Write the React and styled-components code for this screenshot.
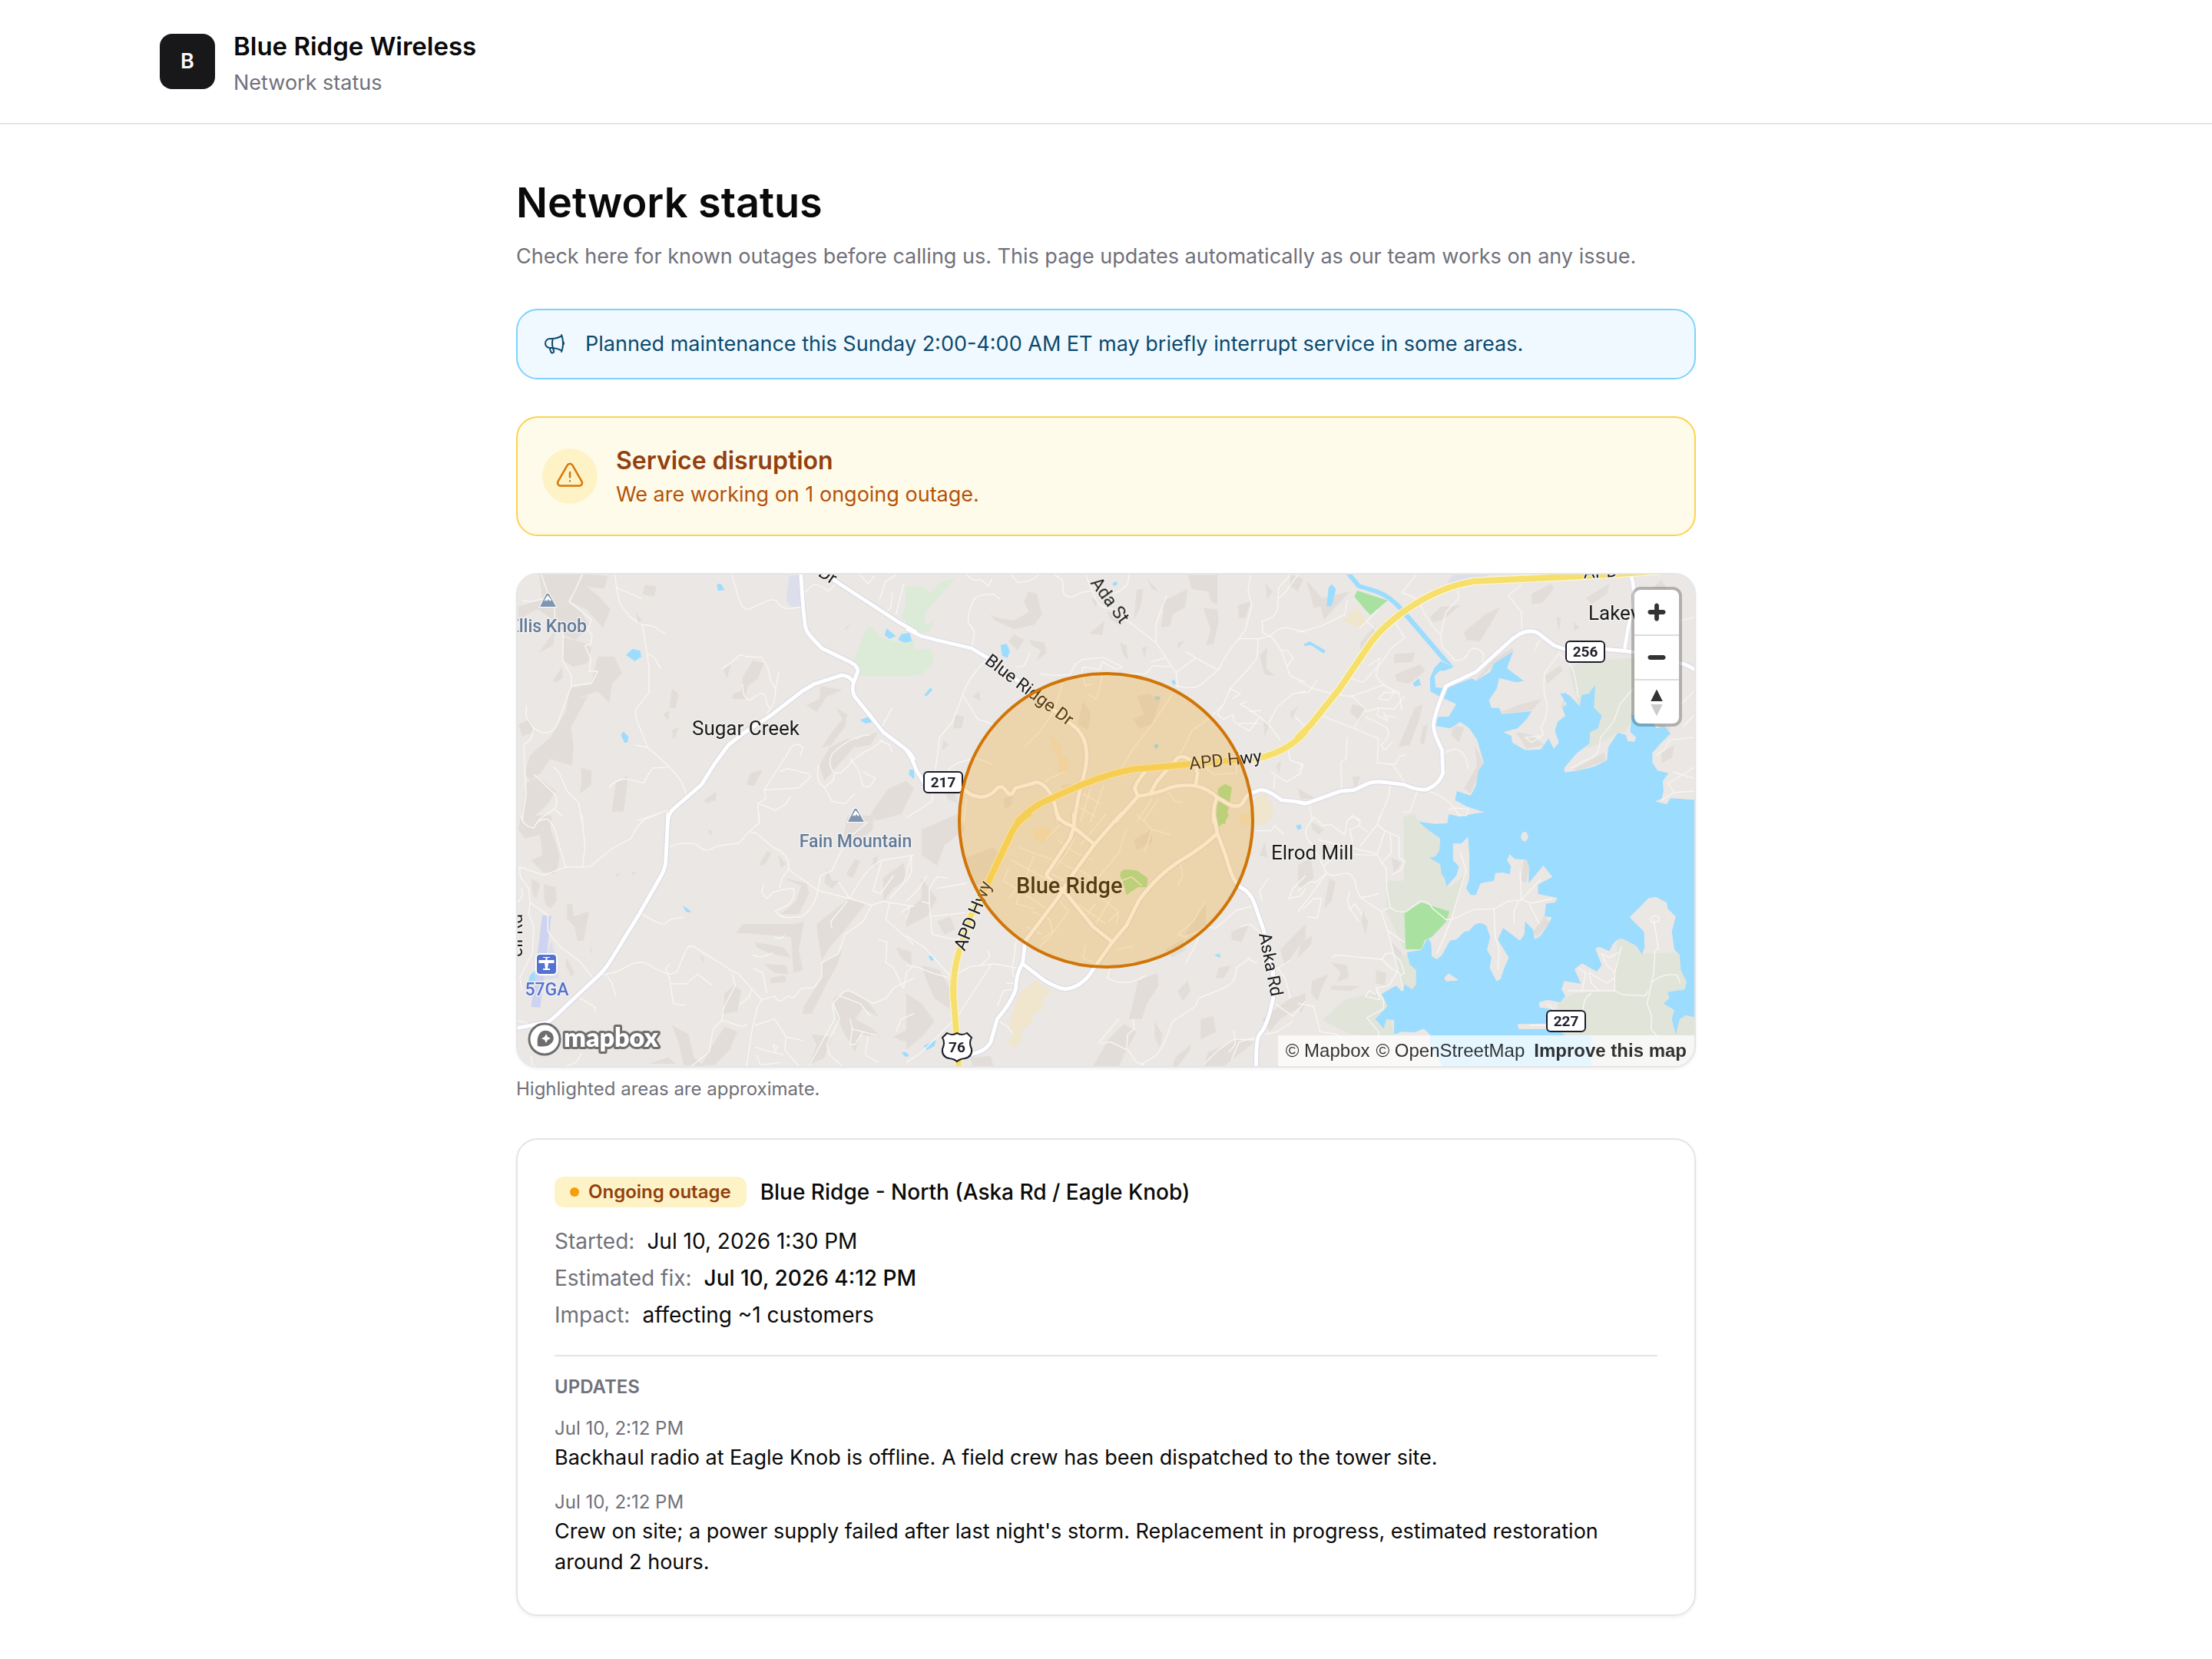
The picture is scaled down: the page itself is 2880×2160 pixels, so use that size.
import React from "react";
import styled, { createGlobalStyle } from "styled-components";
import { HiOutlineMegaphone, HiOutlineExclamationTriangle } from "react-icons/hi2";

const GlobalStyle = createGlobalStyle`
  *, *::before, *::after {
    box-sizing: border-box;
  }
  body {
    margin: 0;
    background: #ffffff;
    color: #0a0a0a;
    font-family: Inter, "Liberation Sans", sans-serif;
    font-size: 27px;
    line-height: 40px;
  }
  h1, h2, h3, p, dl, dd, ul {
    margin: 0;
    padding: 0;
  }
`;

const Header = styled.header`
  border-bottom: 2px solid #e5e5e5;
`;

const HeaderInner = styled.div`
  display: flex;
  align-items: center;
  gap: 24px;
  max-width: 2560px;
  margin: 0 auto;
  padding: 32px 48px;
`;

const Logo = styled.div`
  display: flex;
  align-items: center;
  justify-content: center;
  width: 72px;
  height: 72px;
  border-radius: 16px;
  background: #18181b;
  color: #fafafa;
  font-size: 27px;
  font-weight: 600;
`;

const BrandName = styled.div`
  font-size: 33px;
  font-weight: 600;
  line-height: 56px;
`;

const Muted = styled.p`
  color: #71717a;
`;

const Main = styled.main`
  display: flex;
  flex-direction: column;
  gap: 48px;
  max-width: 1536px;
  margin: 0 auto;
  padding: 64px 0 56px;
`;

const PageTitle = styled.h1`
  margin-bottom: 12px;
  font-size: 54px;
  font-weight: 600;
  line-height: 76px;
`;

const Notice = styled.div`
  display: flex;
  align-items: center;
  gap: 24px;
  padding: 24px 32px;
  border: 2px solid #7dd3fc;
  border-radius: 28px;
  background: #f0f9ff;
  color: #0c4a6e;

  svg {
    width: 32px;
    height: 32px;
  }
`;

const Alert = styled.section`
  display: flex;
  align-items: center;
  gap: 24px;
  padding: 32px;
  border: 2px solid #fcd34d;
  border-radius: 28px;
  background: #fffbeb;
  color: #b45309;
`;

const AlertIcon = styled.span`
  display: flex;
  align-items: center;
  justify-content: center;
  width: 72px;
  height: 72px;
  border-radius: 50%;
  background: #fef3c7;
  color: #d97706;

  svg {
    width: 40px;
    height: 40px;
  }
`;

const AlertTitle = styled.h2`
  color: #92400e;
  font-size: 32px;
  font-weight: 600;
  line-height: 48px;
`;

const MapFrame = styled.div`
  position: relative;
  overflow: hidden;
  border: 2px solid #e5e5e5;
  border-radius: 28px;
  box-shadow: 0 2px 4px rgba(0, 0, 0, 0.06);
`;

const MapCanvas = styled.svg`
  display: block;
  width: 100%;
  height: 640px;
  font-family: Roboto, "Liberation Sans", sans-serif;
`;

const MapLabel = styled.text`
  fill: ${props => props.$color || "#1a1a1a"};
  stroke: #f2f0ee;
  stroke-width: 3px;
  stroke-linejoin: round;
  paint-order: stroke;
  font-size: ${props => props.$size || 23}px;
  font-weight: ${props => props.$weight || 400};
`;

const MapControls = styled.div`
  position: absolute;
  top: 20px;
  right: 20px;
  display: flex;
  flex-direction: column;
  overflow: hidden;
  border-radius: 8px;
  background: #ffffff;
  outline: 4px solid rgba(0, 0, 0, 0.24);
`;

const ControlButton = styled.button`
  display: block;
  width: 58px;
  height: 58px;
  padding: 0;
  border: 0;
  background: transparent;
  cursor: pointer;

  & + & {
    border-top: 2px solid #dddddd;
  }

  svg {
    display: block;
    width: 58px;
    height: 56px;
  }
`;

const MapLogo = styled.a`
  position: absolute;
  left: 12px;
  bottom: 8px;

  svg {
    display: block;
    width: 180px;
    height: 52px;
    font-family: Lato, sans-serif;
  }
`;

const Attribution = styled.div`
  position: absolute;
  right: 0;
  bottom: 0;
  display: flex;
  gap: 8px;
  padding: 0 10px;
  background: rgba(255, 255, 255, 0.75);
  font-family: "Liberation Sans", Arial, sans-serif;
  font-size: 24px;
  line-height: 40px;

  a {
    color: rgba(0, 0, 0, 0.8);
    text-decoration: none;
  }
  a:last-child {
    margin-left: 4px;
    font-weight: 700;
  }
`;

const Caption = styled.p`
  margin-top: 12px;
  color: #71717a;
  font-size: 24px;
  line-height: 32px;
`;

const Card = styled.article`
  padding: 48px;
  border: 2px solid #e5e5e5;
  border-radius: 28px;
  box-shadow: 0 2px 4px rgba(0, 0, 0, 0.06);
`;

const CardHead = styled.div`
  display: flex;
  flex-wrap: wrap;
  align-items: center;
  gap: 18px;
  margin-bottom: 24px;
`;

const Badge = styled.span`
  display: inline-flex;
  align-items: center;
  gap: 12px;
  padding: 0 20px;
  border-radius: 12px;
  background: #fef3c7;
  color: #92400e;
  font-size: 24px;
  font-weight: 600;

  &::before {
    content: "";
    width: 12px;
    height: 12px;
    border-radius: 50%;
    background: #f59e0b;
  }
`;

const CardTitle = styled.h3`
  font-size: 28px;
  font-weight: 500;
`;

const Facts = styled.dl`
  display: flex;
  flex-direction: column;
  gap: 8px;
  font-size: 28px;
`;

const Fact = styled.div`
  display: flex;
  gap: 16px;

  dt {
    color: #71717a;
  }
  dd {
    font-weight: ${props => (props.$strong ? 500 : 400)};
  }
`;

const Updates = styled.div`
  margin-top: 32px;
  padding-top: 24px;
  border-top: 2px solid #e5e5e5;
`;

const UpdatesTitle = styled.h3`
  color: #71717a;
  font-size: 24px;
  font-weight: 600;
  line-height: 32px;
`;

const UpdateList = styled.ul`
  display: flex;
  flex-direction: column;
  gap: 22px;
  margin-top: 22px;
  list-style: none;

  time {
    display: block;
    margin-bottom: 2px;
    color: #71717a;
    font-size: 24px;
    line-height: 32px;
  }
`;

// Each tile has its own origin; inside a tile three units make one map pixel.
const tiles = [
  {
    id: "nw",
    transform: "translate(670 740) scale(0.3333)",
    terrain: [
      "M95 20 L260 20 L230 100 L205 130 L260 170 L290 220 L240 280 L190 260 L150 200 L90 160 L15 200 L15 150 L110 120 Z",
      "M270 20 L365 30 L350 80 L280 70 L330 110 L375 160 L345 230 L280 160 L215 130 L240 75 Z",
      "M190 270 L270 290 L300 310 L285 370 L230 385 L190 360 Z",
      "M325 345 L390 345 L420 410 L380 450 L370 525 L325 480 L235 510 L285 500 L220 620 L230 690 L225 770 L140 745 L100 800 L60 830 L40 800 L60 730 L140 660 L200 560 L215 470 L300 450 Z",
      "M45 840 L90 815 L160 870 L130 920 L60 985 L30 960 Z",
      "M150 440 L185 385 L188 430 L160 445 Z", "M95 330 L160 240 L150 300 Z",
      "M260 780 L300 790 L300 845 L255 880 L262 830 Z", "M395 840 L440 810 L440 850 L425 950 L380 950 Z",
      "M615 470 L640 490 L630 545 L605 545 Z", "M615 630 L645 620 L620 670 Z", "M580 570 L605 555 L600 595 Z",
      "M930 360 L975 370 L950 430 L910 460 L900 510 L850 510 L855 490 L885 480 L890 430 Z",
      "M510 65 L555 70 L545 110 L500 100 Z", "M815 395 L845 375 L830 430 Z", "M475 175 L495 200 L485 225 Z",
      "M920 800 L970 785 L935 850 L905 845 Z", "M740 905 L790 870 L785 905 L750 918 Z",
      "M1285 240 L1310 215 L1300 235 Z", "M1195 460 L1280 475 L1220 500 L1180 560 L1140 535 L1190 510 Z",
      "M1255 545 L1300 570 L1290 620 L1235 690 L1200 700 L1240 640 L1280 590 Z",
      "M1230 700 L1300 665 L1350 670 L1280 750 L1210 830 L1190 770 Z",
      "M1350 660 L1420 640 L1390 690 L1330 700 Z",
      "M1460 860 L1530 830 L1560 860 L1510 960 L1410 985 L1390 960 Z",
      "M1395 290 L1425 275 L1420 315 L1395 325 Z", "M15 610 L60 590 L80 640 L30 655 Z"
    ],
    parks: [
      "M1325 360 L1375 232 L1395 228 L1430 270 L1500 290 L1560 280 L1560 418 L1350 418 Z",
      "M1562 60 L1512 190 L1562 235 Z"
    ],
    estates: ["M1072 30 L1112 25 L1122 150 L1080 150 L1062 125 Z"],
    water: [
      "M790 62 L805 60 L820 84 L795 88 Z", "M435 338 L460 315 L490 322 L495 345 L470 362 Z",
      "M415 650 L425 638 L445 658 L440 680 L430 682 Z", "M1453 235 L1490 265 L1465 275 L1446 262 Z",
      "M1510 258 L1540 252 L1552 282 L1525 290 L1498 280 Z", "M1350 592 L1390 578 L1400 600 L1370 606 Z",
      "M1545 785 L1560 790 L1560 822 L1540 805 Z"
    ],
    minor: [
      "M265 25 L215 130 L300 200 L285 240 L303 262 L298 295 L275 302 L298 355 L292 403 L325 402 L300 450 L222 458 L165 615 Q130 665 75 625 L45 580 L47 535",
      "M155 155 L158 200 L190 260 L188 360 L222 420 L222 458", "M105 25 L130 100", "M30 125 L60 130 L110 120",
      "M75 625 L65 665 L35 690 L42 820 L45 880 L30 985", "M392 25 L398 75 L410 135 L450 190 L500 222 L525 385 L525 485 L475 550 Q470 570 480 600 L520 700 L605 775 L650 830 L672 885",
      "M398 75 L498 118", "M500 222 Q540 218 560 240 L590 255", "M520 335 Q545 340 555 365 L572 392", "M472 690 L520 700",
      "M370 855 Q400 820 435 823 L505 838 Q530 790 540 780 L605 775", "M848 25 L880 130 Q890 160 915 160 L980 130 Q1010 115 1025 130 Q1045 160 1075 158 L1120 150",
      "M1130 95 L1165 65 Q1190 60 1225 90 L1260 55", "M812 392 L870 350 Q875 330 905 345 L965 347 L990 390 L1000 440 L1020 470 L1015 520 L985 570",
      "M1032 405 L1020 470", "M890 450 Q890 510 920 515 L960 487 Q985 490 985 530 L995 545",
      "M1115 735 L1127 700 Q1100 675 1080 700 L1040 765 L975 865 L1110 858 L1155 815 Q1160 800 1130 798 L1065 782 L1035 795",
      "M975 865 L982 900 L950 918 L955 990", "M950 918 L1018 945 L1060 920 L1078 890",
      "M1190 765 Q1170 830 1210 855 L1240 910 L1290 920 L1330 880", "M1390 650 Q1310 655 1240 725 Q1220 770 1250 800 L1245 830 L1210 855",
      "M1440 670 L1400 700 Q1320 740 1305 770 L1275 798 L1250 800", "M1310 740 L1345 790 L1360 850 L1385 855 L1410 820 L1360 795",
      "M1425 672 L1465 690 L1475 720", "M1475 545 L1435 620", "M75 805 L155 880 Q175 910 155 940 L190 970",
      "M152 775 L175 800 L205 870 L250 915 L263 990", "M480 985 L600 945", "M90 985 L155 940",
      "M1425 125 L1450 50 L1490 25", "M1475 95 L1470 150 L1450 175", "M1520 60 L1490 180", "M1350 25 L1380 60 L1405 30"
    ],
    roads: [
      "M1117 0 L1127 150 L1135 225 Q1140 250 1165 275 L1200 312 L1310 365 Q1345 385 1340 405 L1325 445 Q1315 470 1328 500 L1440 640 L1530 708 Q1550 725 1562 750",
      "M598 1000 Q598 960 620 940 L730 845 L780 765 L835 690 L900 640 L1000 575 L1120 482 L1170 452 L1275 418 Q1305 416 1325 445",
      "M1200 15 L1500 210 L1570 250"
    ],
    highway: []
  },
  {
    id: "n",
    transform: "translate(1180 740) scale(0.3333)",
    terrain: [
      "M475 90 L510 100 L530 180 L500 220 L420 238 L350 205 L325 180 L345 190 L420 205 L480 170 L460 130 Z",
      "M420 258 L460 280 L435 320 L400 285 Z", "M480 280 L540 290 L548 330 L510 360 L525 320 L490 300 Z",
      "M715 255 L775 205 L765 260 Z", "M785 170 L820 175 L850 210 L835 225 L800 200 Z", "M835 290 L860 300 L865 360 L845 330 Z",
      "M900 85 L925 80 L915 150 L890 200 Z", "M940 40 L985 90 L960 80 Z", "M1100 25 L1215 25 L1215 140 L1190 130 L1180 90 L1115 80 Z",
      "M1000 130 L1100 80 L1090 150 L1040 180 L1030 225 L995 230 L1005 170 Z", "M1160 155 L1215 160 L1220 210 L1200 295 L1170 300 L1190 240 Z",
      "M1295 145 L1345 130 L1325 195 L1300 195 Z", "M1380 340 L1410 310 L1405 390 L1440 420 L1400 415 Z",
      "M1400 55 L1430 90 L1410 120 L1405 75 Z", "M920 310 L940 305 L930 350 Z", "M1060 290 L1090 280 L1060 315 Z",
      "M1500 560 L1530 540 L1505 590 Z", "M1395 590 L1420 610 L1400 655 Z", "M190 570 L225 580 L215 625 L185 625 Z",
      "M900 500 L950 490 L990 520 L960 610 L910 625 L885 590 L930 570 Z", "M690 520 L720 560 L710 630 L670 610 Z",
      "M145 670 L165 690 L140 710 Z", "M145 860 L190 870 L200 920 L160 900 Z", "M1445 770 L1465 750 L1455 800 Z",
      "M380 900 L420 880 L410 925 L385 940 Z", "M605 850 L650 840 L630 880 Z", "M1500 25 L1550 40 L1530 90 L1500 70 Z",
      "M260 500 L285 480 L290 520 Z", "M720 115 L750 125 L740 150 Z"
    ],
    parks: [
      "M-2 75 L60 68 L90 95 L135 55 L190 40 L150 85 L70 180 L75 225 L110 200 L90 250 L50 250 L-2 222 Z",
      "M-2 320 L100 315 L105 375 L60 415 L-2 418 Z"
    ],
    woods: ["M1218 860 L1245 842 L1272 855 L1262 920 L1245 1000 L1210 980 Z"],
    sand: [
      "M1370 890 L1400 880 L1435 935 L1410 990 L1345 990 Z",
      "M560 650 L605 690 L600 730 L632 740 L630 790 L600 815 L595 740 L570 700 Z"
    ],
    water: [
      "M368 300 L392 295 L404 325 L395 350 L375 342 Z", "M70 495 L95 465 L102 475 L78 500 Z", "M805 60 L820 50 L825 62 L812 70 Z",
      "M1035 440 L1045 434 L1053 448 L1045 456 Z", "M970 500 L990 500 L992 512 L975 515 Z", "M967 692 L978 684 L986 695 L976 706 Z",
      "M10 790 L25 785 L32 815 L25 822 Z", "M-2 255 L15 255 L20 285 L-2 290 Z", "M1552 295 L1562 292 L1562 302 Z"
    ],
    minor: [
      "M235 25 L260 45 L295 45 L320 70 L335 40", "M410 25 L435 55 Q490 55 515 25", "M580 25 L610 45 L615 100 Q640 125 680 95 L720 88",
      "M700 25 L740 120 Q760 160 800 155 L865 205 L975 290 L1055 410 L1060 465", "M870 25 L865 60 L840 85 L810 100",
      "M368 122 L340 100 Q280 100 265 120 Q235 180 243 215 Q270 240 265 265 L255 310", "M975 290 L975 220 L1000 150 L1018 105",
      "M310 360 Q240 430 220 495 L180 600 L130 660 L115 780 L100 910 L0 975", "M220 495 L280 590 Q320 600 335 610 L330 650",
      "M430 385 L460 380 L485 330", "M520 412 L580 418 L640 415 L660 375 L690 355 L770 348 L845 385 L820 395 L765 365 L755 395 L690 385 L685 410",
      "M780 412 L935 412 L965 380 L1030 385", "M955 365 L1010 350", "M1345 25 L1335 90 L1350 140 L1325 240 L1295 280 Q1250 330 1220 395 L1150 455 Q1120 475 1055 460",
      "M1055 405 L1130 350 L1095 325 M1130 350 L1215 395", "M1500 25 L1455 75 L1450 160 Q1440 195 1390 205 L1392 250 L1422 265 L1375 275 L1295 275",
      "M1530 25 L1475 100 L1452 118", "M1422 265 Q1450 230 1490 232 L1560 250", "M1422 265 Q1465 310 1475 350 L1500 420 L1560 445",
      "M1465 320 L1490 322 L1512 350 L1490 380", "M1375 275 L1370 350 L1330 400 L1265 470 L1240 530 L1190 580 L1115 635 L1090 690 L1065 735",
      "M1265 470 L1305 490 L1275 510 M1240 530 L1215 570 L1240 590 L1275 570 L1280 600 L1340 635 L1380 580 L1330 545 L1305 530 L1330 520",
      "M1340 560 L1385 555 M1380 580 L1420 615 L1460 670 M1415 605 L1450 540 L1510 490 L1560 480", "M1300 605 L1375 605",
      "M1490 705 L1500 750 L1550 765 L1540 800 L1485 835 L1425 795 M1440 810 L1435 860", "M1520 580 L1560 620",
      "M1040 490 L960 610 L890 700 L820 810", "M610 450 L575 560 L520 640 L465 695", "M335 765 L270 740 L200 760 L160 790",
      "M690 420 L700 460 L730 450 M765 420 L755 470 L740 510 L710 490", "M235 900 L225 990", "M620 795 L560 820 L535 840",
      "M720 860 L680 990 M770 850 L720 990 M690 880 L760 920 M670 930 L740 970", "M1160 770 L1200 805 L1290 800 L1290 760",
      "M960 900 L900 990 M985 900 L925 990 M1020 870 L1050 910 L1080 915"
    ],
    roads: [
      "M0 235 L60 265 L140 285 L255 312 L310 345 L450 450 L640 605 Q690 640 700 690 Q712 750 690 820 Q668 900 655 995",
      "M0 710 Q20 735 40 790 L70 840 L215 850 Q245 890 290 893 Q330 893 355 858 Q375 845 390 870 Q410 900 425 858 Q480 845 510 835 Q550 845 575 905 L595 985",
      "M815 992 L905 890 L960 880 L1000 868 Q1060 840 1130 850 Q1180 860 1215 895 L1240 910 Q1290 945 1315 915 Q1330 880 1355 875 L1385 865 Q1415 865 1465 905 L1520 910 L1562 920",
      "M905 890 L892 860 Q900 830 945 780", "M950 885 L980 830 L1060 740 Q1085 725 1125 760 L1138 800 L1130 850", "M1215 895 Q1195 930 1202 995"
    ],
    highway: ["M1562 635 Q1490 715 1380 740 L1110 765 L880 785 Q760 810 640 865 L530 915 Q470 950 430 995"]
  },
  {
    id: "ne",
    transform: "translate(1690 740) scale(0.338 0.3333)",
    terrain: [
      "M510 190 L550 150 L625 145 L560 200 L520 210 Z", "M640 250 L720 180 L780 150 L740 220 L700 285 L650 280 Z",
      "M900 100 L975 60 L985 80 L940 135 L900 140 Z", "M1110 115 L1200 60 L1190 100 L1130 140 Z", "M995 190 L1012 195 L1005 245 Z",
      "M1060 210 L1085 230 L1065 245 Z", "M30 45 L70 90 L110 140 L60 155 L45 90 Z", "M240 290 L300 220 L290 290 L240 330 Z",
      "M370 335 L450 330 L440 365 L370 370 Z", "M375 415 L470 375 L490 400 L430 450 L380 440 Z", "M210 530 L260 545 L240 600 L200 560 Z",
      "M385 700 L450 545 L480 530 L470 580 L430 690 Z", "M480 620 L500 610 L485 690 L470 680 Z", "M680 690 L714 760 L690 820 L665 880 L640 860 L690 770 Z",
      "M600 615 L640 620 L620 680 L590 650 Z", "M680 440 L750 360 L825 310 L830 325 L750 380 L700 430 Z",
      "M780 560 L860 530 L940 510 L900 555 L790 568 Z", "M950 420 L1010 380 L1020 400 L960 450 Z", "M840 640 L900 650 L950 690 L880 705 Z",
      "M1110 400 L1130 395 L1125 440 Z", "M1060 785 L1180 720 L1185 750 L1080 790 Z", "M1380 610 L1435 620 L1420 645 Z",
      "M1400 720 L1450 690 L1440 740 L1400 760 Z", "M1400 45 L1420 80 L1370 75 Z", "M210 815 L240 810 L220 870 Z", "M0 860 L70 900 L10 900 Z",
      "M1010 545 L1030 500 L1025 540 Z", "M200 90 L100 200 L80 120 Z"
    ],
    sage: ["M1045 390 L1100 365 L1300 350 L1300 560 L1260 640 L1230 640 L1150 690 L1110 700 L1080 540 Z", "M410 970 L450 960 L460 1000 L405 1000 Z"],
    woods: ["M217 110 L228 87 L345 125 L280 182 L262 165 Z"],
    sand: ["M175 205 L225 152 L265 205 L240 235 Z"],
    estates: ["M575 55 L600 25 L740 22 L700 48 L620 62 Z"],
    water: [
      "M580 465 L670 430 L685 440 L740 405 L755 372 L828 325 L805 390 L870 440 L840 445 L775 428 L765 470 L735 515 L745 545 L775 545 L785 570 L830 565 L900 558 L880 590 L845 625 L790 640 L822 655 L825 680 L875 710 L935 708 L965 665 L985 705 L1005 680 L990 635 L1000 600 L1030 575 L1018 545 L1035 530 L1010 490 L1030 487 L1050 500 L1085 540 L1093 495 L1120 490 L1145 455 L1140 545 L1170 575 L1155 625 L1125 640 L1122 685 L1070 725 L1025 780 L1028 797 L1080 790 L1140 775 L1190 750 L1195 700 L1232 642 L1262 650 L1270 675 L1295 678 L1303 660 L1280 640 L1285 570 L1370 600 L1380 625 L1410 615 L1435 645 L1400 680 L1365 720 L1365 760 L1385 790 L1428 800 L1405 830 L1408 870 L1400 900 L1375 910 L1420 922 L1435 898 L1535 905 L1535 995 L575 995 L580 965 L620 970 L720 953 L650 930 L605 905 L612 870 L665 888 L685 850 L695 790 L716 760 L690 670 L660 625 L625 600 L585 625 L530 615 L540 580 L580 580 L610 530 L545 500 L510 480 L508 430 L525 390 L550 362 L600 385 L565 400 Z",
      "M185 22 L207 22 L240 62 L300 80 Q360 100 410 160 L600 385 L555 360 L390 165 Q350 115 290 95 L228 76 Z",
      "M118 75 L130 62 L146 80 L130 148 L110 148 Z", "M22 300 L45 285 L105 320 L100 333 L50 300 L25 302 Z", "M442 450 L465 430 L474 455 L450 462 Z"
    ],
    land: ["M526 420 L545 400 L575 400 L595 435 L580 470 L530 465 Z"],
    minor: [
      "M0 250 L90 225 L180 180 L190 125 M235 235 L310 160 M262 205 L300 240 M375 215 L412 270 L360 310 L320 370 L250 445 L205 430",
      "M455 25 L400 95 Q450 110 470 135 Q490 200 550 260 L555 305 L605 360 Q650 360 660 320 Q690 300 715 335 L710 375",
      "M550 260 Q560 210 570 170 L620 115 L615 85", "M860 65 L810 105 L860 170 L862 240", "M940 270 Q915 300 912 325",
      "M1010 325 L950 410 Q940 480 960 530 Q960 590 935 620 L945 650 L900 680 L875 660 L935 655",
      "M1005 330 L1055 385 Q1070 420 1078 505", "M1290 470 L1240 530 L1215 600 L1165 660 Q1160 720 1145 730 L1050 780",
      "M270 380 L315 350 L300 420 Q330 465 390 485 L400 555 M205 500 L330 455 L385 490 M330 485 L310 510 L350 515 L370 485 Z",
      "M260 560 L310 545 L370 550 L410 500 M310 545 L305 575 L345 595 L330 560 M380 580 L330 575 M90 575 L215 625 L310 665 L305 760 L365 765 L410 835",
      "M205 495 L260 550 L215 625 M260 580 L340 620 Q365 650 320 690 L335 710 L365 675 M345 765 L375 765 L390 735 L418 728",
      "M190 660 L185 745 L165 755 L168 865", "M565 720 L600 705 Q650 710 655 785", "M0 440 L60 470 L130 490 L205 500 M0 485 L40 485 L75 435",
      "M355 845 L350 890 L310 985 M460 870 L430 950 L400 952", "M500 870 Q570 890 600 935 L655 940 L650 965 L620 965 L600 935 L575 945",
      "M1380 730 L1410 710 L1430 670 L1530 660 M1400 905 L1450 875 L1530 870 M1425 840 L1530 775 M1445 795 L1525 820 M1425 840 L1450 875",
      "M1480 620 L1530 570 M1475 530 L1530 475 M1470 205 L1530 190 M0 765 L20 770 L0 790 M45 925 L55 990 M190 985 L210 965 L240 990"
    ],
    roads: [
      "M-2 912 Q30 922 50 912 L165 870 L215 866 L270 840 Q300 830 330 835 L410 845 Q450 865 490 865 Q540 850 558 800 L555 710 Q520 640 522 610 Q525 570 570 460 L685 405 L830 272 Q880 235 920 250 L985 300 L1025 315 L1180 315 L1250 322 L1300 328",
      "M1258 315 L1272 230 L1290 150 Q1300 70 1280 20", "M1470 370 Q1500 375 1535 400"
    ],
    highway: ["M1400 10 L1100 30 L680 50 Q560 70 450 140 Q340 210 280 290 L160 470 L50 610 L-5 665"]
  },
  {
    id: "sw",
    transform: "translate(670 1060) scale(0.3333)",
    terrain: [
      "M25 5 L145 5 L140 60 L160 110 L175 160 L170 200 L155 235 L110 225 L65 180 L110 160 L100 80 L40 95 L15 60 Z",
      "M115 275 L160 285 L165 335 L140 370 L120 350 L115 320 Z", "M65 255 L100 270 L85 330 L70 310 Z",
      "M205 350 L225 350 L230 400 L290 380 L270 495 L245 495 L235 440 L205 410 Z", "M200 560 L235 620 L220 635 L200 590 Z",
      "M955 200 L985 145 L1005 150 L975 200 Z", "M1030 160 L1060 195 L1040 210 Z", "M1295 235 L1330 175 L1350 185 L1320 250 Z",
      "M1220 215 L1240 260 L1270 260 L1240 290 L1210 270 Z", "M1400 170 L1420 165 L1410 205 L1400 200 Z",
      "M1050 250 L1140 270 L1150 310 L1110 390 L1040 390 L1100 340 L1120 280 Z", "M865 465 L890 430 L1090 430 L1130 420 L1110 530 L1125 610 L1090 620 L1080 480 L900 465 Z",
      "M940 500 L1050 520 L1080 560 L1000 545 L945 520 Z", "M975 585 L1060 590 L1070 625 L1015 620 Z", "M1000 640 L1055 630 L1060 655 L1000 660 Z",
      "M1180 430 L1280 350 L1305 330 L1370 350 L1300 440 L1230 520 L1200 570 L1185 480 Z", "M1440 250 L1520 190 L1530 250 L1480 290 L1440 340 Z",
      "M1130 750 L1200 640 L1200 580 L1280 530 L1260 590 L1220 660 L1160 780 L1125 780 Z",
      "M1245 720 L1300 690 L1380 730 L1420 790 L1360 760 L1330 800 L1400 840 L1430 870 L1350 860 L1330 930 L1290 860 L1260 800 Z",
      "M820 700 L860 670 L885 690 L870 770 L815 780 Z", "M775 900 L820 830 L870 850 L840 920 L780 980 L730 980 Z",
      "M615 825 L680 860 L700 950 L740 985 L660 980 L640 890 Z", "M525 975 L600 950 L630 975 Z", "M725 550 L740 560 L735 585 Z",
      "M395 235 L415 228 L400 245 Z", "M455 230 L475 222 L465 240 Z", "M755 60 L772 65 L765 85 Z", "M295 505 L305 550 L298 540 Z",
      "M1490 520 L1550 540 L1550 590 L1510 560 Z", "M1160 860 L1240 870 L1210 950 L1150 980 L1180 900 Z",
      "M1480 870 L1560 830 L1560 900 L1500 880 Z", "M1300 5 L1400 5 L1400 60 L1350 100 L1280 140 L1290 60 Z"
    ],
    estates: ["M145 495 L172 600 L172 640 L80 650 Z"],
    runway: ["M108 395 L143 398 L100 755 L65 753 Z"],
    water: ["M78 612 L60 630 L53 660 L80 660 Z", "M656 356 L688 378 L685 384 L670 382 Z", "M1512 930 L1530 930 L1540 945 L1525 948 Z"],
    minor: [
      "M25 5 Q30 45 75 55 Q90 15 130 20 Q160 50 165 90 L180 140 L200 207 L295 205 L380 135 L455 95 Q480 40 510 20 L560 0",
      "M263 0 L275 130 L265 205 M200 207 L115 238 L15 205 M20 205 L22 245 L55 290 L60 345 L130 395 L130 460 L180 520 L255 575 L310 645",
      "M12 345 L30 320 L28 290 M60 345 L55 390 L75 440 L70 540 L20 640 L30 690", "M600 130 Q650 105 710 118 Q740 150 765 138 Q790 120 875 115 L915 68 L955 35 L955 0",
      "M915 68 L945 75 L1010 130 Q1060 150 1070 190 L1070 215 L1110 245 L1185 298 L1310 330 L1395 355 L1440 340 L1465 345 L1560 360",
      "M1070 215 L1045 250 L1035 290 M975 275 L965 305 L985 330 L1010 305 Q1060 290 1090 290 Q1100 320 1070 355 L1015 380",
      "M1185 298 Q1170 370 1120 400 L1070 405 Q1030 400 1020 380 M1185 298 L1195 240 L1240 220 L1270 155 L1315 85 L1380 30",
      "M490 385 Q560 430 585 430 L610 410 L660 403", "M345 628 L400 615 L470 580 L510 580 Q570 620 610 625 L635 615 L670 530 Q680 510 700 517 L850 612 L875 625 L965 725",
      "M605 585 L590 605 L605 640 L620 740 L665 747 M610 662 L670 663 L715 625 L770 668 M360 630 L380 660 L395 708 M255 718 L315 755 L315 775",
      "M965 725 L1015 710 Q1030 740 1050 725 L1065 710 L1090 718 L1120 680 L1170 678 L1200 635 L1200 580 L1265 545 L1290 470 L1360 420 L1395 355",
      "M965 725 L950 750 L930 830 L905 990 M850 625 L862 670 L815 760 L810 805 L775 840 L760 930 L690 985 M810 805 L890 830 L910 820",
      "M925 680 L915 715 L878 745 M940 825 L1015 800 L1035 830 L1060 870 L1055 920 L1110 985 M1060 870 L1125 885 M930 550 L960 560 L1010 542 M930 600 L970 620 L985 700",
      "M1310 330 L1265 265 M1310 330 Q1370 210 1435 180 L1560 160 M1435 180 L1400 300 L1430 310 L1480 240 M1550 160 L1520 270 L1465 330 M1465 345 L1450 410 L1560 510",
      "M1245 740 Q1290 680 1310 690 L1400 740 L1450 720 L1480 680 L1560 640 M1245 740 L1270 800 L1220 900 L1230 940 L1280 985 M1240 740 L1250 800 L1195 900 L1150 985",
      "M1270 710 L1350 740 L1390 790 M1310 800 L1320 840 L1420 865 M1320 830 L1310 900 L1330 900 L1360 850 M1560 590 L1530 620 L1520 680 L1480 600 L1450 580 L1455 500 L1420 490",
      "M940 910 L990 925 L1050 940 M945 940 L960 980 L1040 970 M1010 900 L1028 910 L1018 925 Z M200 985 L240 970 L262 935 M70 985 L65 945 M12 805 L60 820",
      "M1510 385 L1545 360 L1530 410 M1240 445 L1235 420 L1300 340 M1015 483 L1045 485 L1055 472 M1380 870 L1370 940 L1420 970 M1490 850 L1510 800 L1560 780"
    ],
    roads: ["M600 -5 L590 190 Q585 220 570 245 L490 385 L370 580 Q350 610 330 628 L200 750 Q150 800 130 812 L0 838"],
    highway: []
  },
  {
    id: "s",
    transform: "translate(1180 1060) scale(0.3333)",
    terrain: [
      "M60 60 L200 0 L230 60 L150 120 L120 200 L60 160 Z", "M60 250 L120 330 L80 400 L0 440 L0 380 L60 330 Z",
      "M235 170 L340 130 L380 180 L320 260 L260 280 L240 230 Z", "M60 590 L130 610 L170 680 L170 760 L110 720 L80 650 Z",
      "M0 700 L60 740 L110 810 L60 870 L0 920 Z", "M120 420 L170 400 L190 450 L150 470 Z", "M250 950 L330 945 L340 985 L260 985 Z",
      "M905 650 L980 620 L985 670 L940 740 L920 800 L870 800 L890 720 Z", "M790 880 L850 820 L900 850 L860 920 L830 985 L730 985 Z",
      "M1010 530 L1080 490 L1090 530 L1040 560 Z", "M1150 800 L1200 790 L1210 850 L1150 880 Z", "M1090 470 L1170 340 L1170 430 L1110 480 Z",
      "M1270 460 L1340 430 L1310 500 L1270 490 Z", "M1220 600 L1270 590 L1240 640 L1210 640 Z", "M1460 530 L1560 430 L1560 480 L1480 590 Z",
      "M1390 800 L1500 720 L1560 700 L1560 740 L1460 800 L1420 850 Z", "M1060 690 L1100 650 L1110 690 L1080 730 Z",
      "M890 100 L960 60 L960 110 L900 140 Z", "M970 810 L1000 860 L990 910 L970 870 Z", "M1400 110 L1410 170 L1380 160 Z",
      "M1050 950 L1110 900 L1110 920 L1060 985 L1040 985 Z", "M1180 930 L1290 880 L1360 890 L1240 985 L1160 985 Z"
    ],
    woods: ["M1210 0 L1262 0 L1245 30 L1220 50 Z", "M835 240 Q835 216 860 216 L900 220 L943 250 L940 285 L905 285 L860 316 L850 275 Z"],
    sand: [
      "M512 645 L530 670 L568 690 L540 720 L535 760 L495 780 L490 815 L445 850 L452 880 L420 915 L395 890 L420 860 L400 820 L440 700 Z",
      "M490 60 L560 50 L570 90 L530 110 L500 100 Z", "M1300 0 L1440 0 L1400 40 L1310 45 Z"
    ],
    water: ["M85 555 L100 552 L108 570 L98 573 Z", "M68 905 L115 882 L110 905 L80 922 Z", "M1203 550 L1225 545 L1226 562 Z", "M1522 45 L1540 40 L1545 55 L1530 62 Z", "M-2 935 L10 938 L5 948 Z"],
    minor: [
      "M20 160 L20 225 L0 265 M80 240 L50 290 L0 340 M160 250 L120 245 L90 290 L90 350 L60 340 M120 290 L235 270 M90 350 L95 400 L230 385",
      "M95 400 L100 470 L190 490 L240 470 M0 475 L70 520 L170 630 M0 590 L50 600 L100 620 L170 640 M0 970 L60 930 L200 790 L330 590",
      "M170 640 L250 595 L345 585 L430 600 M320 530 L325 560 L290 590 M430 490 L415 600 L420 640 M390 660 L425 662 M415 685 L380 690 L355 750 M355 805 L395 830 L415 855",
      "M440 130 L520 160 L610 190 M410 180 L560 260 M400 210 L380 260 L520 350 L560 380 M460 240 L430 350 L500 370 M500 160 L460 260 L400 330",
      "M545 100 L600 40 M590 100 L660 150 L730 180 M540 220 L620 260 M620 200 L700 230 L760 280 M660 90 L620 160 L560 230",
      "M700 280 L830 380 L790 420 M640 330 L780 430 M740 350 L700 400 M800 330 L740 430 M830 380 L820 430 M850 300 L840 260 L880 245 L920 280",
      "M600 340 L635 380 L560 480 L520 520 M490 380 L560 410 L570 460 L530 490 M470 440 L530 470 M700 510 L690 560 L740 585",
      "M780 0 L680 120 M900 0 L960 60 L930 150 M960 60 L1030 80 M860 60 L830 150 L790 200 L740 260 M1070 190 L1080 240 L1060 280",
      "M800 590 L785 640 Q860 680 935 630 M820 530 L890 515 M1350 360 L1290 375 L1210 445 L1160 440 L1120 530 L1090 585 M1170 340 L1120 420 L1060 470 L1090 480 L1160 450",
      "M1345 560 L1290 600 Q1290 660 1240 680 L1140 720 L1130 750 L1040 810 L1010 890 L980 940 L915 980 M1370 580 L1340 570 M1305 440 L1345 430 L1390 470",
      "M750 895 L830 800 M760 895 L800 890 L860 920 L865 860 L890 840 L885 800 M865 920 L900 970 L930 980 M1365 880 L1280 880 L1220 920 L1160 980",
      "M1370 870 L1300 890 L1270 960 M1280 845 L1285 900 L1260 930 M1440 740 L1510 790 L1560 730 M1400 860 L1450 850 L1510 810 M1450 600 L1480 640 L1500 720",
      "M1360 65 L1425 65 L1440 45 L1475 80 M1390 340 L1380 300 L1415 250 M1560 240 L1510 290 L1495 330 L1540 320 L1560 290 M1440 610 L1500 570"
    ],
    roads: [
      "M655 -5 L655 50 L640 95 L545 238", "M588 -5 Q595 30 650 48 L735 118",
      "M1200 -5 L1215 75 L1250 170 Q1275 265 1305 285 Q1345 305 1360 350 L1395 450 L1432 610 L1433 720 Q1410 830 1380 860 Q1365 880 1367 990",
      "M842 -5 L735 118 L650 235 L590 330 L465 495 L455 580 Q430 620 428 680 Q415 730 355 800 L330 890 Q310 930 240 940",
      "M545 238 L625 310 L730 440 L805 500 L860 435 L910 335 Q980 240 1065 185 Q1160 130 1215 75",
      "M805 500 L755 570 L710 635 Q670 680 620 683 Q590 680 540 650 L455 585"
    ],
    highway: ["M485 -5 Q440 20 415 65 L320 265 L250 400 L205 540 Q180 620 185 720 L205 990"]
  },
  {
    id: "se",
    transform: "translate(1690 1060) scale(0.338 0.3333)",
    terrain: [
      "M0 200 L50 170 L60 250 L20 290 L0 280 Z", "M120 250 L145 265 L130 340 L100 370 L110 310 Z", "M250 380 L270 420 L260 470 L245 420 Z",
      "M55 650 L120 625 L95 670 L75 730 L50 700 Z", "M130 580 L190 590 L195 640 L150 655 L165 620 Z", "M130 670 L240 672 L200 690 L125 685 Z",
      "M300 610 L340 620 L335 670 L300 660 Z", "M10 500 L55 475 L50 510 L0 560 Z", "M50 30 L100 60 L80 80 L55 60 Z", "M360 170 L400 190 L370 230 Z",
      "M360 500 L400 540 L410 600 L380 590 Z", "M905 460 L950 400 L970 425 L920 480 Z", "M870 170 L890 200 L880 270 L860 260 Z", "M0 740 L30 740 L10 780 Z"
    ],
    sage: [
      "M408 15 L470 25 L560 90 L580 290 L650 230 L590 410 L515 480 L410 530 L340 380 L345 260 L408 260 Z",
      "M95 805 L180 725 L300 700 L350 750 L370 870 L200 860 Z", "M375 560 L460 540 L460 690 L400 690 Z",
      "M1000 740 L1060 700 L1220 690 L1230 490 L1290 490 L1330 545 L1470 540 L1510 700 L1530 780 L1530 985 L1100 985 L1010 850 Z"
    ],
    woods: ["M410 385 L475 345 L583 380 L570 420 L515 480 L490 490 L475 528 L415 528 Z"],
    water: [
      "M465 30 L500 60 L548 95 L545 140 L530 165 L505 170 L548 195 L553 235 L565 250 L572 282 L610 240 L620 205 L597 180 L597 115 L630 115 L655 88 L660 160 L660 250 L648 290 L665 316 L685 316 L703 270 L755 260 L760 230 L790 228 L815 235 L820 205 L805 180 L815 157 L835 175 L880 178 L890 205 L888 270 L945 200 L980 245 L925 275 L925 312 L1000 327 L990 345 L955 350 L950 400 L978 402 L965 430 L935 475 L912 490 L905 450 L875 420 L872 470 L855 494 L790 445 L770 490 L812 560 L795 600 L780 645 L765 653 L738 600 L745 560 L728 530 L740 480 L725 435 Q690 410 660 455 L640 460 L610 490 L585 495 L555 550 L535 567 L515 555 L513 505 L500 482 L475 530 L420 540 L430 585 L455 610 L455 665 L440 685 L412 665 L400 693 L378 670 L322 703 L345 750 L298 800 L330 838 L340 800 L370 805 L370 860 L400 850 L450 852 L485 838 L508 860 L508 905 L560 990 L1130 990 L1130 865 L1060 865 L1030 865 L1000 840 L850 840 L845 820 L955 818 L1000 765 L930 755 L928 735 L960 725 L1010 735 L1030 710 L1015 685 L1025 652 L1090 662 L1065 605 L1095 583 L1150 615 L1170 590 L1145 525 L1160 518 L1200 535 Q1220 480 1255 488 L1305 515 L1325 548 L1335 520 L1333 460 L1277 403 L1310 370 L1350 328 L1380 323 L1420 345 L1425 370 L1455 400 L1440 460 L1450 530 L1470 548 L1475 610 L1497 655 L1490 685 L1425 695 L1430 720 L1408 740 L1450 765 L1440 800 L1455 862 L1470 800 L1495 785 L1535 795 L1535 -5 L700 -5 L620 10 L580 0 L585 35 L530 38 Z"
    ],
    land: [
      "M858 85 L866 70 L880 70 L888 90 L878 107 L862 103 Z", "M563 640 L580 622 L615 645 L612 650 L570 653 Z"
    ],
    minor: [
      "M60 10 L95 45 L125 40 L180 80 L190 25 Q210 0 240 25 L235 45 L270 70 M235 45 L200 60 L210 110 M60 10 L30 60 Q25 95 60 125 L110 230 L130 240 L190 230 Q220 240 225 290 L240 325 L320 380 L345 455 L365 530 L385 610 L350 670 L300 680",
      "M320 0 L305 40 L240 125 M305 40 L335 65 L390 90 L390 170 L412 185 L395 220 L360 235 M335 65 L305 155 L78 100 M355 75 L360 150 L325 190",
      "M100 200 L155 155 L305 160 L340 215 L342 285 L355 365 L320 380 M355 365 L380 380 L415 382 L470 340 Q500 335 520 370 L570 412 L590 412 L680 372 L755 370 L810 340 L860 335 L900 348 L980 330",
      "M625 150 L648 220 L620 310 L590 412 L555 500 L535 545 M755 370 L760 480 L775 530 L770 605 M860 335 L855 220 M860 335 L935 255 M850 340 L832 380 L832 430 M890 348 L930 430",
      "M200 300 L190 340 L200 370 L235 418 M200 370 L220 350 L248 395 M240 325 L270 322 L310 310 M345 455 L412 502 M130 560 L145 550 L325 567 L355 600 L390 620 L405 690",
      "M325 567 L335 545 L365 543 L395 575 L410 620 L395 630 M300 680 L330 730 L330 760 L265 795 L310 850 L310 985 M300 680 L315 725 L260 712 L275 688 L300 705 M0 740 L60 750 L85 850 L150 860 L240 960",
      "M110 230 L40 330 L0 380 M110 230 L70 265 L45 265 L0 300 M90 330 L60 330 L20 370 M90 330 L75 405 L35 402",
      "M1370 410 L1388 525 L1375 535 L1370 620 L1345 740 L1362 790 L1360 840 L1385 870 M1355 412 L1370 397 L1390 400 L1392 418 L1365 425 Z M1360 660 Q1400 620 1460 628 L1472 660",
      "M1340 710 L1250 705 L1220 690 L1140 690 L1040 690 M1220 690 L1220 620 L1245 518 M1220 620 L1190 590 L1170 545 L1200 560 L1235 540 M1095 690 L1108 620 L1080 600 M1120 618 L1190 660 L1220 640 M1120 618 L1130 660 L1160 690 M1130 700 Q1090 720 1100 800",
      "M890 825 L960 825 M960 740 L1010 790 M1335 712 L1350 690"
    ],
    roads: [],
    highway: []
  }
];

const layers = [
  { key: "terrain", fill: "#dcd7d0", opacity: 0.6 },
  { key: "parks", fill: "#dcebd8" },
  { key: "sage", fill: "#e0e4d9" },
  { key: "woods", fill: "#a9e2a0" },
  { key: "sand", fill: "#f0e5cd" },
  { key: "estates", fill: "#dddeeb" },
  { key: "runway", fill: "#cdd3f0" },
  { key: "water", fill: "#9bdcff" },
  { key: "land", fill: "#eae7e4" },
  { key: "minor", fill: "none", stroke: "#f9f7f3", width: 4 },
  { key: "roads", fill: "none", stroke: "#d3d5e6", width: 20 },
  { key: "roads", fill: "none", stroke: "#ffffff", width: 15 },
  { key: "highway", fill: "none", stroke: "#fdf7d8", width: 31 },
  { key: "highway", fill: "none", stroke: "#f6df6c", width: 24 }
];

const RouteShield = ({ x, y, number }) => (
  <g>
    <rect x={x} y={y} width="50" height="27" rx="5" fill="#ffffff" stroke="#1c1c2b" strokeWidth="2" />
    <text x={x + 25} y={y + 20} textAnchor="middle" fontSize="19" fontWeight="700" fill="#222230">
      {number}
    </text>
  </g>
);

const Peak = ({ x, y }) => (
  <g transform={`translate(${x} ${y})`}>
    <path d="M0 18 L8 2 Q10 -1 12 2 L21 18 Z" fill="#7f95b0" stroke="#ffffff" strokeWidth="2" paintOrder="stroke" />
    <path d="M6 9 L10 3 L15 9 L13 11 L11 8 L9 11 L8 9 L6 11 Z" fill="#ffffff" />
  </g>
);

const OutageMap = () => (
  <MapCanvas viewBox="674 748 1532 640" preserveAspectRatio="xMidYMid slice" role="img" aria-label="Outage map">
    <rect x="0" y="0" width="2880" height="2160" fill="#eae7e4" />
    {layers.map((layer, i) => (
      <g
        key={i}
        fill={layer.fill}
        stroke={layer.stroke || "none"}
        strokeWidth={layer.width}
        opacity={layer.opacity}
        strokeLinejoin="round"
      >
        {tiles.map(tile => (
          <g key={tile.id} transform={tile.transform}>
            {(tile[layer.key] || []).map(d => (
              <path key={d} d={d} />
            ))}
          </g>
        ))}
      </g>
    ))}

    <Peak x={703} y={772} />
    <Peak x={1104} y={1052} />
    <MapLabel x="764" y="823" textAnchor="end" $color="#627b99" $weight={500}>Ellis Knob</MapLabel>
    <MapLabel x="1114" y="1103" textAnchor="middle" $color="#627b99" $weight={500}>Fain Mountain</MapLabel>
    <MapLabel x="901" y="957" $size={26}>Sugar Creek</MapLabel>
    <MapLabel x="1655" y="1119" $size={26}>Elrod Mill</MapLabel>
    <MapLabel x="2068" y="807" $size={26}>Lakeview</MapLabel>
    <MapLabel x="1323" y="1163" $size={29} $weight={500}>Blue Ridge</MapLabel>
    <MapLabel transform="translate(1281 863) rotate(37)" $size={23}>Blue Ridge Dr</MapLabel>
    <MapLabel transform="translate(1064 749) rotate(33)" $size={23}>Dr</MapLabel>
    <MapLabel transform="translate(1419 759) rotate(54)">Ada St</MapLabel>
    <MapLabel transform="translate(1549 1002) rotate(-6)">APD Hwy</MapLabel>
    <MapLabel transform="translate(1256 1239) rotate(-68)">APD Hwy</MapLabel>
    <MapLabel transform="translate(2062 753) rotate(-3)">APD</MapLabel>
    <MapLabel transform="translate(1639 1216) rotate(79)">Aska Rd</MapLabel>
    <MapLabel transform="translate(680 1246) rotate(-90)">ell Rd</MapLabel>

    <rect x="698" y="1242" width="27" height="27" rx="5" fill="#5472d2" stroke="#ffffff" strokeWidth="2" />
    <path
      d="M707 1246h9v1h-3.500v3h9v4h-7.500l-1 7h3v2h-9v-2h3l-1-7h-7.500v-4h9v-3h-3.500z"
      fill="#ffffff"
    />
    <MapLabel x="712" y="1296" textAnchor="middle" $size={23} $color="#5472d2" $weight={500}>57GA</MapLabel>

    <RouteShield x={1203} y={1005} number="217" />
    <RouteShield x={2039} y={835} number="256" />
    <RouteShield x={2014} y={1316} number="227" />
    <path
      d="M1233 1345 Q1240 1349 1246 1345 Q1252 1349 1259 1345 L1265 1351 Q1261 1357 1265 1366 Q1266 1376 1256 1378 Q1249 1379 1246 1382 Q1243 1379 1236 1378 Q1226 1376 1227 1366 Q1231 1357 1227 1351 Z"
      fill="#ffffff"
      stroke="#1c1c2b"
      strokeWidth="2"
    />
    <text x="1246" y="1370" textAnchor="middle" fontSize="19" fontWeight="700" fill="#222230">76</text>

    <circle cx="1440" cy="1068" r="191" fill="#f59e0b" fillOpacity="0.26" stroke="#d07508" strokeWidth="4" />
  </MapCanvas>
);

const updates = [
  {
    id: 1,
    time: "Jul 10, 2:12 PM",
    text: "Backhaul radio at Eagle Knob is offline. A field crew has been dispatched to the tower site."
  },
  {
    id: 2,
    time: "Jul 10, 2:12 PM",
    text: "Crew on site; a power supply failed after last night's storm. Replacement in progress, estimated restoration around 2 hours."
  }
];

const App = () => (
  <>
    <GlobalStyle />
    <Header>
      <HeaderInner>
        <Logo>B</Logo>
        <div>
          <BrandName>Blue Ridge Wireless</BrandName>
          <Muted>Network status</Muted>
        </div>
      </HeaderInner>
    </Header>

    <Main>
      <div>
        <PageTitle>Network status</PageTitle>
        <Muted>
          Check here for known outages before calling us. This page updates automatically as our team works on any
          issue.
        </Muted>
      </div>

      <Notice>
        <HiOutlineMegaphone />
        <p>Planned maintenance this Sunday 2:00-4:00 AM ET may briefly interrupt service in some areas.</p>
      </Notice>

      <Alert>
        <AlertIcon>
          <HiOutlineExclamationTriangle />
        </AlertIcon>
        <div>
          <AlertTitle>Service disruption</AlertTitle>
          <p>We are working on 1 ongoing outage.</p>
        </div>
      </Alert>

      <div>
        <MapFrame>
          <OutageMap />
          <MapControls>
            <ControlButton type="button" aria-label="Zoom in">
              <svg viewBox="0 0 29 29" fill="#333333">
                <path d="M14.5 8.5c-.75 0-1.500.75-1.500 1.500v3h-3c-.75 0-1.500.75-1.500 1.500S9.250 16 10 16h3v3c0 .75.75 1.500 1.500 1.500S16 19.750 16 19v-3h3c.75 0 1.500-.75 1.500-1.500S19.750 13 19 13h-3v-3c0-.75-.75-1.500-1.500-1.500z" />
              </svg>
            </ControlButton>
            <ControlButton type="button" aria-label="Zoom out">
              <svg viewBox="0 0 29 29" fill="#333333">
                <path d="M10 13c-.75 0-1.500.75-1.500 1.500S9.250 16 10 16h9c.75 0 1.500-.75 1.500-1.500S19.750 13 19 13h-9z" />
              </svg>
            </ControlButton>
            <ControlButton type="button" aria-label="Reset bearing to north">
              <svg viewBox="0 0 29 29">
                <path d="M10.500 14l4-8 4 8h-8z" fill="#333333" />
                <path d="M10.500 16l4 8 4-8h-8z" fill="#cccccc" />
              </svg>
            </ControlButton>
          </MapControls>
          <MapLogo href="https://www.mapbox.com/" aria-label="Mapbox homepage">
            <svg viewBox="0 0 180 52">
              <circle cx="23" cy="25" r="20" fill="#ffffff" stroke="#6e6e6e" strokeWidth="3" />
              <path d="M14 34 C13 25 14 20 18 16 C23 12 30 14 33 18 C36 23 35 28 31 31 C27 35 20 35 14 34 Z" fill="#6e6e6e" />
              <path d="M25 18 L27 22 L31 24 L27 26 L25 30 L23 26 L19 24 L23 22 Z" fill="#ffffff" />
              <text
                x="48"
                y="35"
                fontSize="34"
                fontWeight="800"
                fill="#ffffff"
                stroke="#6e6e6e"
                strokeWidth="6"
                strokeLinejoin="round"
                paintOrder="stroke"
              >
                mapbox
              </text>
            </svg>
          </MapLogo>
          <Attribution>
            <a href="https://www.mapbox.com/about/maps">© Mapbox</a>
            <a href="https://www.openstreetmap.org/about">© OpenStreetMap</a>
            <a href="https://apps.mapbox.com/feedback">Improve this map</a>
          </Attribution>
        </MapFrame>
        <Caption>Highlighted areas are approximate.</Caption>
      </div>

      <Card>
        <CardHead>
          <Badge>Ongoing outage</Badge>
          <CardTitle>Blue Ridge - North (Aska Rd / Eagle Knob)</CardTitle>
        </CardHead>
        <Facts>
          <Fact>
            <dt>Started:</dt>
            <dd>Jul 10, 2026 1:30 PM</dd>
          </Fact>
          <Fact $strong>
            <dt>Estimated fix:</dt>
            <dd>Jul 10, 2026 4:12 PM</dd>
          </Fact>
          <Fact>
            <dt>Impact:</dt>
            <dd>affecting ~1 customers</dd>
          </Fact>
        </Facts>
        <Updates>
          <UpdatesTitle>UPDATES</UpdatesTitle>
          <UpdateList>
            {updates.map(update => (
              <li key={update.id}>
                <time>{update.time}</time>
                <p>{update.text}</p>
              </li>
            ))}
          </UpdateList>
        </Updates>
      </Card>
    </Main>
  </>
);

export default App;
